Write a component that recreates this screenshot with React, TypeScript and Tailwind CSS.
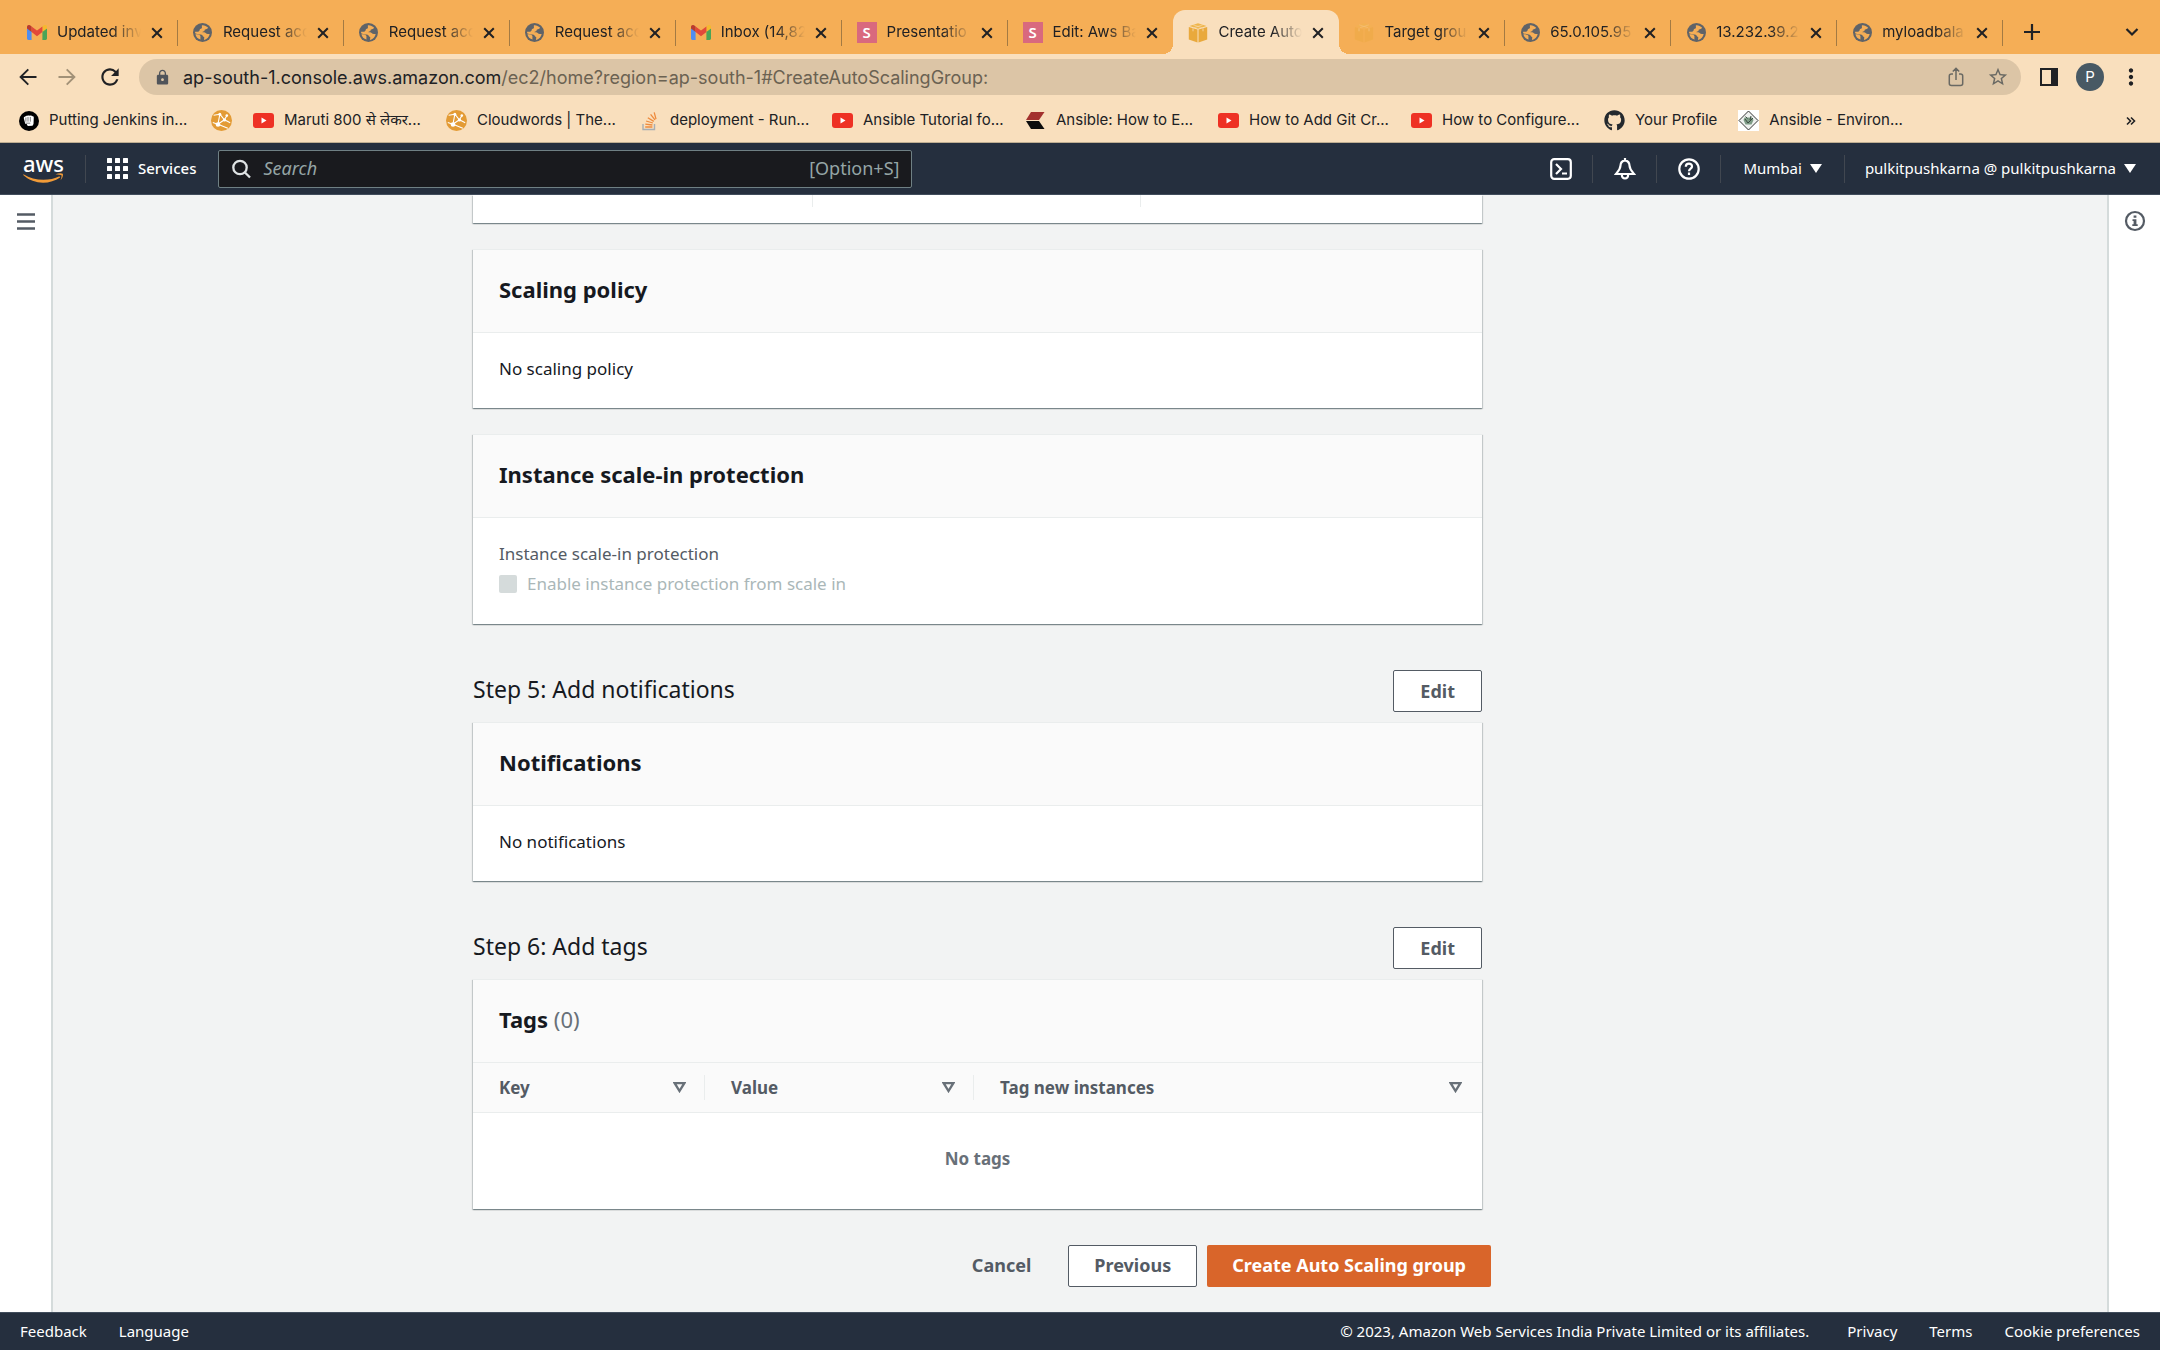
import React from "react";
import { MdRefresh, MdLock, MdStarBorder, MdMoreVert } from "react-icons/md";
import { FaGithub } from "react-icons/fa";

type IconProps = { className?: string };

function Gmail({ className = "" }: IconProps) {
  return (
    <svg viewBox="0 0 20 15" className={"h-[15px] w-5 " + className} aria-hidden="true">
      <path d="M0 3v10.6c0 .8.6 1.4 1.4 1.4H4.600V6.200z" fill="#4f8df0" />
      <path d="M20 3v10.600c0 .8-.6 1.400-1.400 1.400H15.400V6.200z" fill="#4aa457" />
      <path d="M15.400 1.500v5.600L20 3.600V2c0-1.900-2.100-2.600-3.400-1.500z" fill="#f5b92e" />
      <path d="M4.600 7.100V1.500l5.400 4 5.400-4v5.600L10 11.200z" fill="#e2483a" />
      <path d="M0 2v1.600l4.600 3.500V1.500L3.400.5C2.100-.6 0 .1 0 2z" fill="#b93a2e" />
    </svg>
  );
}

function Globe() {
  return (
    <svg viewBox="0 0 18 18" className="size-[19px]" aria-hidden="true">
      <circle cx="9" cy="9" r="9" fill="#5f6368" />
      <path
        d="M8.500 2.100c2.200-.2 4.300.7 5.700 2.200-.2 1-1 1.500-2 1.600-1.100.1-1.300.8-1.300 1.600-.7.500-1.800.4-2 1.200 1.500-.2 3 .2 3.600 1.300.7.600 2.100.2 3.300.4-.5 2.700-2.400 4.900-5 5.600-.6-.5-.4-1.300 0-1.900-.1-.9-1.200-.9-1.500-1.700-.2-1-.9-1.500-1.900-1.600-1.800-.1-3.900-.4-5.400-1.200V8.300l2.900-.1c1.100-.2 1.500-1.200 1.600-2.200.4-.6 1.400-.5 1.800-1.100.5-.9-.2-1.800.2-2.800z"
        fill="#f5ae56"
      />
      <path d="M2.300 10.600c1.800 0 4 .3 4.600 1.500.5 1-.2 2 .3 3.500-2.500-.5-4.500-2.500-4.900-5z" fill="#f5ae56" />
    </svg>
  );
}

function Slides() {
  return (
    <span className="flex size-[21px] items-center justify-center bg-[#d9697e] font-['Noto_Sans'] text-[15px] font-semibold text-white">
      S
    </span>
  );
}

function Cube({ className = "" }: IconProps) {
  return (
    <svg viewBox="0 0 20 20" className={"size-5 " + className} aria-hidden="true">
      <path d="M.8 4l8.700 2.600v13L.8 16.400z" fill="#e9a93c" />
      <path d="M19.200 4l-8.700 2.600v13l8.700-3.200z" fill="#e9a93c" />
      <path d="M10 .2L1.500 3.100 10 5.700l8.500-2.600z" fill="#efb64c" />
      <path d="M5.200 1.900l8.600 2.700M14.800 1.900L6.200 4.600" stroke="#f8dcb4" strokeWidth=".6" />
      <path d="M5 5.300v3M15 5.300v3" stroke="#f8dcb4" strokeWidth=".8" />
    </svg>
  );
}

function YouTube() {
  return (
    <svg viewBox="0 0 21 15" className="h-[15px] w-[21px]" aria-hidden="true">
      <rect width="21" height="15" rx="3" fill="#ee3124" />
      <path d="M8.500 4.500l5 3-5 3z" fill="#fff" />
    </svg>
  );
}

function Fist() {
  return (
    <svg viewBox="0 0 20 20" className="size-5" aria-hidden="true">
      <circle cx="10" cy="10" r="10" fill="#000" />
      <path
        d="M4.800 7.200c0-.9.500-1.400 1.300-1.400.3-.8 1.100-1.200 2.200-1 .7-.5 1.800-.5 2.600-.1 1-.4 2-.2 2.600.6.8 0 1.300.5 1.300 1.300l-.3 6.300-1 1.900-4.700.2-1.200-1.900H6.300z"
        fill="#fff"
      />
      <path d="M6.900 6.500v4.200M9 6v4.700M11.300 6v4.700M6.500 12.200h4.800" stroke="#000" strokeWidth=".5" />
    </svg>
  );
}

function Cloudwords() {
  return (
    <svg viewBox="0 0 21 21" className="size-[21px]" aria-hidden="true">
      <circle cx="10.500" cy="10.500" r="10.500" fill="#e39b35" />
      <path
        d="M2.600 5.200l6.400-1M8.800 4l4.400 5.600M16 5.500l-2.600 4.300M8.800 4.500L7 14M13.400 9.800L6.800 14.300M1.800 12.500l5 1.800M7 14.300l9.800 4M13.400 9.800l5.800 3"
        fill="none"
        stroke="#fff"
        strokeWidth="1.100"
      />
      <circle cx="8.800" cy="4.300" r="1.500" fill="#fff" />
      <circle cx="15.800" cy="5.600" r="1.300" fill="#fff" />
      <circle cx="13.500" cy="10" r="1.600" fill="#fff" />
      <circle cx="7" cy="14.500" r="2.300" fill="#fff" />
    </svg>
  );
}

function StackOverflow() {
  return (
    <svg viewBox="0 0 16 20" className="h-5 w-4" aria-hidden="true">
      <path d="M1 13v5.500h11.500V13" fill="none" stroke="#a7adb3" strokeWidth="1.400" />
      <path
        d="M3.200 16h7.200M3.300 13.200l7.100.8M4.100 10l6.800 2M5.800 6.700l6 3.700M8.600 3.400l4.400 5.500M12.200 1.400l1.800 6.800"
        stroke="#ee8a3c"
        strokeWidth="1.300"
      />
    </svg>
  );
}

function Chevrons() {
  return (
    <svg viewBox="0 0 19 17" className="h-[17px] w-[19px]" aria-hidden="true">
      <path d="M5 0h13.500L13 8H0z" fill="#a3312e" />
      <path d="M0 9h13l5.500 8H5z" fill="#0c0c0c" />
    </svg>
  );
}

function AnsibleSite() {
  return (
    <svg viewBox="0 0 21 21" className="size-[21px]" aria-hidden="true">
      <rect width="21" height="21" fill="#fff" />
      <path d="M10.500 1l9.500 9.500-9.500 9.500L1 10.500z" fill="#eef1ef" stroke="#333" strokeWidth="1" />
      <path d="M6.500 7.500h7.500l1.500 2.500-2 4.500h-6l-2-4.500z" fill="#7d9c86" />
      <path d="M7 9l3 4 5-5M7.500 6.500l2 2M13 6l-1 4" fill="none" stroke="#3c4a41" strokeWidth="1" />
    </svg>
  );
}

function Cross() {
  return (
    <svg viewBox="0 0 12 12" className="size-3" aria-hidden="true">
      <path d="M1.200 1.200l9.600 9.600M10.800 1.200l-9.600 9.600" stroke="#202124" strokeWidth="2" />
    </svg>
  );
}

function Arrow({ className = "" }: IconProps) {
  return (
    <svg viewBox="0 0 18 18" className={"size-[18px] " + className} fill="none" stroke="currentColor" strokeWidth="1.900" aria-hidden="true">
      <path d="M17.500 9H2M9.300 1.300L1.600 9l7.700 7.700" />
    </svg>
  );
}

const tabs: { title: string; icon: React.ReactNode; active?: boolean }[] = [
  { title: "Updated inv", icon: <Gmail /> },
  { title: "Request acc", icon: <Globe /> },
  { title: "Request acc", icon: <Globe /> },
  { title: "Request acc", icon: <Globe /> },
  { title: "Inbox (14,82", icon: <Gmail /> },
  { title: "Presentatio", icon: <Slides /> },
  { title: "Edit: Aws Ba", icon: <Slides /> },
  { title: "Create Auto", icon: <Cube />, active: true },
  { title: "Target grou", icon: <Cube className="opacity-40" /> },
  { title: "65.0.105.95", icon: <Globe /> },
  { title: "13.232.39.2", icon: <Globe /> },
  { title: "myloadbala", icon: <Globe /> },
];

function Tab({ title, icon, active, beforeActive }: { title: string; icon: React.ReactNode; active?: boolean; beforeActive?: boolean }) {
  return (
    <div className={active ? "relative flex h-11 min-w-0 flex-1 items-center rounded-t-xl bg-[#f9dfbd] pt-px" : "flex h-11 min-w-0 flex-1 items-center pt-px"}>
      {active && (
        <>
          <span className="absolute bottom-0 -left-2.5 size-2.5 bg-[radial-gradient(circle_at_0_0,transparent_10px,#f9dfbd_10px)]" />
          <span className="absolute -right-2.5 bottom-0 size-2.5 bg-[radial-gradient(circle_at_100%_0,transparent_10px,#f9dfbd_10px)]" />
        </>
      )}
      <button className="flex min-w-0 flex-1 items-center gap-2.5 pl-[15px] text-left">
        <span className="flex w-5 shrink-0 justify-center">{icon}</span>
        <span className="min-w-0 flex-1 overflow-hidden whitespace-nowrap [mask-image:linear-gradient(to_right,black_65%,transparent)]">
          {title}
        </span>
      </button>
      <button aria-label={"Close " + title} className="flex w-8 shrink-0 items-center justify-center">
        <Cross />
      </button>
      <span className={active || beforeActive ? "ml-1 h-[26px] w-px" : "ml-1 h-[26px] w-px bg-[#a37a43]"} />
    </div>
  );
}

const bookmarks: { title?: string; icon: React.ReactNode; fixed?: boolean }[] = [
  { title: "Putting Jenkins in...", icon: <Fist />, fixed: true },
  { icon: <Cloudwords /> },
  { title: "Maruti 800 से लेकर...", icon: <YouTube />, fixed: true },
  { title: "Cloudwords | The...", icon: <Cloudwords />, fixed: true },
  { title: "deployment - Run...", icon: <StackOverflow />, fixed: true },
  { title: "Ansible Tutorial fo...", icon: <YouTube />, fixed: true },
  { title: "Ansible: How to E...", icon: <Chevrons />, fixed: true },
  { title: "How to Add Git Cr...", icon: <YouTube />, fixed: true },
  { title: "How to Configure...", icon: <YouTube />, fixed: true },
  { title: "Your Profile", icon: <FaGithub className="size-[21px] text-[#24292e]" /> },
  { title: "Ansible - Environ...", icon: <AnsibleSite />, fixed: true },
];

function Browser() {
  return (
    <header className="border-b border-[#bfae92] bg-[#f9dfbd] font-['Inter','Noto_Sans',sans-serif] text-[15px] text-[#202124]">
      <div className="flex items-end bg-[#f5ae56] pt-2.5 pl-3">
        <div className="flex min-w-0 flex-1">
          {tabs.map((t, i) => (
            <Tab key={i} {...t} beforeActive={tabs[i + 1]?.active} />
          ))}
        </div>
        <div className="flex h-11 w-[157px] items-center justify-between pr-[21px] pl-[21px]">
          <button aria-label="New tab">
            <svg viewBox="0 0 16 16" className="size-4" aria-hidden="true">
              <path d="M8 0v16M0 8h16" stroke="#202124" strokeWidth="2.200" />
            </svg>
          </button>
          <button aria-label="Search tabs">
            <svg viewBox="0 0 14 14" className="size-3.5" aria-hidden="true">
              <path d="M1.500 4L7 9.500 12.500 4" fill="none" stroke="#202124" strokeWidth="2.200" />
            </svg>
          </button>
        </div>
      </div>

      <div className="flex items-center pt-[5px] pr-4 pl-[19px]">
        <div className="flex w-[120px] items-center gap-[21px]">
          <button aria-label="Back"><Arrow /></button>
          <button aria-label="Forward" className="text-[#a29177]"><Arrow className="rotate-180" /></button>
          <button aria-label="Reload"><MdRefresh className="size-[26px]" /></button>
        </div>
        <div className="flex h-9 min-w-0 flex-1 items-center rounded-full bg-[#dcc5a6] pr-3 pl-[15px]">
          <MdLock className="size-[17px] shrink-0 text-[#50545a]" />
          <div className="relative ml-3 flex-1 text-[18px]">
            <input aria-label="Address" className="absolute inset-0 w-full bg-transparent outline-none" />
            <span>ap-south-1.console.aws.amazon.com</span>
            <span className="text-[#6b6252]">/ec2/home?region=ap-south-1#CreateAutoScalingGroup:</span>
          </div>
          <button aria-label="Share" className="mr-[23px]">
            <svg viewBox="0 0 16 20" className="h-5 w-4" fill="none" stroke="#6a6963" strokeWidth="1.500" aria-hidden="true">
              <path d="M5 7H3.500C2.100 7 1.300 7.800 1.300 9v7.500c0 1.300.8 2 2.200 2h9c1.400 0 2.200-.7 2.200-2V9c0-1.200-.8-2-2.200-2H11M8 13V1.500M4.800 4.500L8 1.300l3.200 3.200" />
            </svg>
          </button>
          <button aria-label="Bookmark this page"><MdStarBorder className="size-[22px] text-[#6a6963]" /></button>
        </div>
        <button aria-label="Side panel" className="ml-[19px]">
          <svg viewBox="0 0 18 18" className="size-[18px]" aria-hidden="true">
            <rect x="1" y="1" width="16" height="16" fill="none" stroke="#202124" strokeWidth="2" />
            <rect x="11" width="7" height="18" fill="#202124" />
          </svg>
        </button>
        <button aria-label="Profile" className="ml-[18px] flex size-7 items-center justify-center rounded-full bg-[#485964] text-[15px] text-white">P</button>
        <button aria-label="Menu" className="ml-[14px]"><MdMoreVert className="size-[26px]" /></button>
      </div>

      <nav aria-label="Bookmarks" className="flex h-[47px] items-center gap-[21px] pt-1 pr-6 pl-[18px]">
        {bookmarks.map((b, i) => (
          <a key={i} href="#" className="flex shrink-0 items-center gap-2.5 whitespace-nowrap" aria-label={b.title ?? "Cloudwords"}>
            <span className="flex w-[21px] justify-center">{b.icon}</span>
            {b.title && <span className={b.fixed ? "min-w-[141px]" : ""}>{b.title}</span>}
          </a>
        ))}
        <button aria-label="More bookmarks" className="ml-auto">
          <svg viewBox="0 0 10 10" className="size-2.5" fill="none" stroke="#202124" strokeWidth="1.600" aria-hidden="true">
            <path d="M1 1.500L4.500 5 1 8.500M5 1.500L8.500 5 5 8.500" />
          </svg>
        </button>
      </nav>
    </header>
  );
}

function CaretDown() {
  return (
    <svg viewBox="0 0 12 9" className="h-[9px] w-3" aria-hidden="true">
      <path d="M0 0h12L6 9z" fill="#fff" />
    </svg>
  );
}

function NavIcon({ label, children }: { label: string; children: React.ReactNode }) {
  return (
    <button aria-label={label} className="flex h-7 w-16 items-center justify-center border-r border-[#414750]">
      <svg viewBox="0 0 22 22" className="size-[22px]" fill="none" stroke="#fff" strokeWidth="2.200" aria-hidden="true">
        {children}
      </svg>
    </button>
  );
}

function AwsNav() {
  return (
    <nav aria-label="AWS" className="flex h-[52px] items-center border-b border-[#414d5c] bg-[#252f3e] text-[15px] text-white">
      <a href="#" aria-label="AWS home" className="flex h-7 w-[86px] flex-col items-start justify-center border-r border-[#414750] pl-[23px] leading-none">
        <span className="w-10 text-center text-[22px] leading-4 font-medium">aws</span>
        <svg viewBox="0 0 41 10" className="mt-0.5 h-2.5 w-[41px]" aria-hidden="true">
          <path d="M.5 1.200C11 8 26 8.500 36.500 3.200l.6 1.200C27 11.500 11 12 .2 2z" fill="#f19b38" />
          <path d="M32.500 1.200c3-1.200 6.300-1.300 7.200-.5.800.9-.1 4.400-2.100 6.500.6-2 1.300-4.300.8-4.900-.5-.6-3-.5-5.900-1.100z" fill="#f19b38" />
        </svg>
      </a>
      <button className="ml-[21px] flex items-center gap-2.5 font-medium">
        <svg viewBox="0 0 21 21" className="size-[21px]" fill="#fff" aria-hidden="true">
          {[0, 8, 16].map((y) => [0, 8, 16].map((x) => <rect key={x + "-" + y} x={x} y={y} width="5" height="5" rx=".5" />))}
        </svg>
        Services
      </button>
      <div className="ml-[22px] flex h-[38px] w-[694px] items-center rounded-xs border border-[#6f8084] bg-[#191a1e] px-3 text-[18px]">
        <svg viewBox="0 0 20 20" className="size-5 shrink-0" fill="none" stroke="#dfe3e4" strokeWidth="2.300" aria-hidden="true">
          <circle cx="9" cy="8.500" r="6.700" />
          <path d="M13.700 13.200l5.300 5.300" />
        </svg>
        <input aria-label="Search" placeholder="Search" className="ml-3 min-w-0 flex-1 bg-transparent outline-none placeholder:text-[#95a5a6] placeholder:italic" />
        <span className="text-[#95a5a6]">[Option+S]</span>
      </div>
      <div className="ml-auto flex items-center pr-6">
        <NavIcon label="CloudShell">
          <rect x="1.200" y="1.200" width="19.600" height="19.600" rx="3" />
          <path d="M6 6l5 5-5 5M12 15.500h5" />
        </NavIcon>
        <NavIcon label="Notifications">
          <path d="M11 2.300c-3.500.5-4.500 3-4.600 5.700C6.300 11 4.500 12.700 2 16h18c-2.500-3.300-4.300-5-4.400-8-.1-2.700-1.100-5.200-4.600-5.700zM7.800 16.500c.2 5.200 6.200 5.200 6.400 0M11 0v2.500" />
        </NavIcon>
        <NavIcon label="Help">
          <circle cx="11" cy="11" r="9.700" />
          <path d="M7.800 8.800C7.900 4.500 14.200 4.800 14 8.600c-.1 2-3 2.200-3 4.600M11 14.500v2.400" />
        </NavIcon>
        <button className="flex h-7 items-center gap-2 border-r border-[#414750] px-[22px]">Mumbai <CaretDown /></button>
        <button className="flex items-center gap-2 pl-5">pulkitpushkarna @ pulkitpushkarna <CaretDown /></button>
      </div>
    </nav>
  );
}

function Card({ title, count, children }: { title: string; count?: string; children: React.ReactNode }) {
  return (
    <section className="border-t border-[#eaeded] bg-white shadow-[0_1px_1px_0_rgba(0,28,36,0.3),1px_1px_1px_0_rgba(0,28,36,0.15),-1px_1px_1px_0_rgba(0,28,36,0.15)]">
      <h2 className="border-b border-[#eaeded] bg-[#fafafa] px-[26px] pt-[23px] pb-[27px] text-[22px] leading-8 font-bold">
        {title} {count && <span className="font-normal text-[#687078]">{count}</span>}
      </h2>
      {children}
    </section>
  );
}

function Text({ children }: { children: React.ReactNode }) {
  return <p className="px-[26px] pt-[23px] pb-[26px] leading-[26px]">{children}</p>;
}

function StepHeading({ children }: { children: React.ReactNode }) {
  return (
    <div className="mt-[46px] mb-2.5 flex items-start justify-between">
      <h1 className="pt-[3px] text-[23px] leading-8">{children}</h1>
      <button className="h-[42px] rounded-xs border border-[#545b64] bg-white px-[26px] text-[18px] font-bold text-[#545b64]">Edit</button>
    </div>
  );
}

function SortIcon() {
  return (
    <svg viewBox="0 0 13 11" className="h-[11px] w-[13px] shrink-0" aria-hidden="true">
      <path d="M1.700 1.200h9.600L6.500 9z" fill="none" stroke="#687078" strokeWidth="2.300" />
    </svg>
  );
}

function HeaderCell({ children, className, last }: { children: React.ReactNode; className: string; last?: boolean }) {
  return (
    <th scope="col" className={"py-3 font-bold " + className}>
      <button className={last ? "flex h-[25px] w-full items-center justify-between pr-5 pl-[26px]" : "flex h-[25px] w-full items-center justify-between border-r border-[#eaeded] pr-[18px] pl-[26px]"}>
        {children}
        <SortIcon />
      </button>
    </th>
  );
}

export default function App() {
  return (
    <div className="flex min-h-screen flex-col bg-[#f2f3f3] font-['Noto_Sans',sans-serif] text-[17px] text-[#16191f]">
      <Browser />
      <AwsNav />
      <div className="flex flex-1">
        <aside className="w-[53px] shrink-0 border-r-2 border-[#d5dbdb] bg-white pt-4 text-center">
          <button aria-label="Open navigation">
            <svg viewBox="0 0 18 17" className="h-[17px] w-[18px]" aria-hidden="true">
              <path d="M0 1.500h18M0 8.500h18M0 15.500h18" stroke="#545b64" strokeWidth="2.400" />
            </svg>
          </button>
        </aside>
        <main className="min-w-0 flex-1 pl-[420px]">
          <div className="w-full max-w-[1009px]">
            <div className="mb-[26px] flex h-7 bg-white shadow-[0_1px_1px_0_rgba(0,28,36,0.3),1px_1px_1px_0_rgba(0,28,36,0.15),-1px_1px_1px_0_rgba(0,28,36,0.15)]">
              <div className="h-3 w-[340px] border-r border-[#eaeded]" />
              <div className="h-3 w-[328px] border-r border-[#eaeded]" />
            </div>
            <div className="flex flex-col gap-[26px]">
              <Card title="Scaling policy">
                <Text>No scaling policy</Text>
              </Card>
              <Card title="Instance scale-in protection">
                <div className="px-[26px] pt-[23px] pb-[27px] leading-[26px]">
                  <p className="text-[#545b64]">Instance scale-in protection</p>
                  <label className="mt-1 flex items-center gap-2.5 text-[#aab7b8]">
                    <input type="checkbox" disabled className="size-[18px] appearance-none rounded-xs bg-[#d5dbdb]" />
                    Enable instance protection from scale in
                  </label>
                </div>
              </Card>
            </div>

            <StepHeading>Step 5: Add notifications</StepHeading>
            <Card title="Notifications">
              <Text>No notifications</Text>
            </Card>

            <StepHeading>Step 6: Add tags</StepHeading>
            <Card title="Tags" count="(0)">
              <table className="w-full table-fixed border-collapse">
                <thead>
                  <tr className="border-b border-[#eaeded] bg-[#fafafa] text-left text-[#545b64]">
                    <HeaderCell className="w-[232px]">Key</HeaderCell>
                    <HeaderCell className="w-[269px]">Value</HeaderCell>
                    <HeaderCell className="" last>Tag new instances</HeaderCell>
                  </tr>
                </thead>
                <tbody>
                  <tr>
                    <td colSpan={3} className="h-24 pb-1 text-center font-bold text-[#687078]">No tags</td>
                  </tr>
                </tbody>
              </table>
            </Card>
          </div>
          <div className="mt-9 mb-[25px] flex h-[42px] w-full max-w-[1018px] justify-end gap-2.5 text-[18px] font-bold">
            <button className="px-[27px] text-[#545b64]">Cancel</button>
            <button className="rounded-xs border border-[#545b64] bg-white px-[25px] text-[#545b64]">Previous</button>
            <button className="rounded-xs bg-[#d9652a] px-[25px] text-white">Create Auto Scaling group</button>
          </div>
        </main>
        <aside className="w-[53px] shrink-0 border-l-2 border-[#d5dbdb] bg-white pt-[15px] text-center">
          <button aria-label="Open info panel">
            <svg viewBox="0 0 22 22" className="size-[22px]" aria-hidden="true">
              <circle cx="11" cy="11" r="9" fill="none" stroke="#545b64" strokeWidth="2.200" />
              <path d="M9.600 5.500h2.800v2.300H9.600zM8.500 9.200h3.900v5h1.300v1.900H8.300v-1.900h1.300v-3.100H8.500z" fill="#545b64" />
            </svg>
          </button>
        </aside>
      </div>
      <footer className="flex h-[38px] items-center justify-between border-t border-[#414d5c] bg-[#252f3e] px-5 text-[15px] text-white">
        <div className="flex gap-8">
          <a href="#">Feedback</a>
          <a href="#">Language</a>
        </div>
        <div className="flex gap-8">
          <span className="mr-1.5">© 2023, Amazon Web Services India Private Limited or its affiliates.</span>
          <a href="#">Privacy</a>
          <a href="#">Terms</a>
          <a href="#">Cookie preferences</a>
        </div>
      </footer>
    </div>
  );
}
